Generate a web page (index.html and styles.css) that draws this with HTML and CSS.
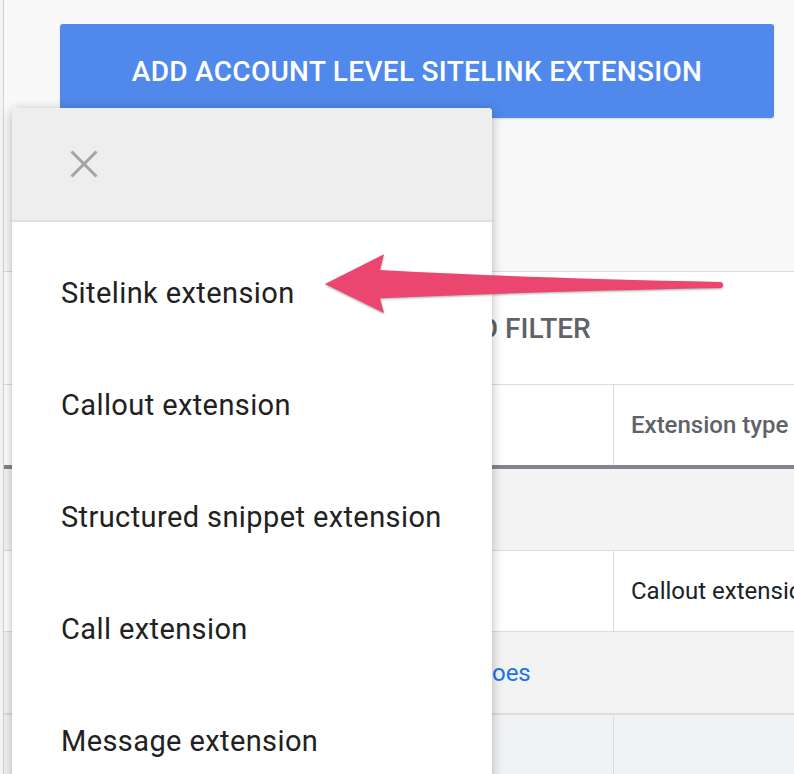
FILE: index.html
```html
<!DOCTYPE html>
<html lang="en">
<head>
<meta charset="utf-8">
<title>Extensions</title>
<link rel="stylesheet" href="styles.css">
</head>
<body>
<div class="page">
  <div class="rail"></div>
  <main class="content">
    <div class="btn-wrap">
      <button class="add-btn">ADD ACCOUNT LEVEL SITELINK EXTENSION</button>
    </div>
    <section class="table-card">
      <div class="filter-bar"><span class="add-filter">ADD FILTER</span></div>
      <div class="row head">
        <div class="cell c1"></div>
        <div class="cell c2">Extension type</div>
      </div>
      <div class="row span grey1"></div>
      <div class="row plain">
        <div class="cell c1"></div>
        <div class="cell c2 body-text">Callout extension</div>
      </div>
      <div class="row span grey2"><a class="link">See all shoes</a></div>
      <div class="row grey3">
        <div class="cell c1"></div>
        <div class="cell c2"></div>
      </div>
    </section>
  </main>
</div>

<div class="menu">
  <div class="menu-head">
    <svg class="close" width="28" height="28" viewBox="0 0 28 28" aria-label="Close">
      <path d="M1.5 1.5 L26.5 26.5 M26.5 1.5 L1.5 26.5" stroke="#a3a3a3" stroke-width="3" fill="none"/>
    </svg>
  </div>
  <ul class="menu-list">
    <li>Sitelink extension</li>
    <li>Callout extension</li>
    <li>Structured snippet extension</li>
    <li>Call extension</li>
    <li>Message extension</li>
  </ul>
</div>

<svg class="arrow" width="410" height="80" viewBox="0 0 410 80">
  <path d="M5 39 L64 9.3 L60 25 Q200 33 400 37 A3 3 0 0 1 400 43 Q200 47 60 53.3 L64 68 Z" fill="#ea4670"/>
</svg>
</body>
</html>
```

FILE: styles.css
```css
* { box-sizing: border-box; }

html, body {
  margin: 0;
  padding: 0;
  width: 794px;
  height: 774px;
  overflow: hidden;
  background: #f9f9f9;
  font-family: Roboto, "Liberation Sans", Arial, sans-serif;
}

.page {
  display: flex;
  width: 794px;
  height: 774px;
}

.rail {
  flex: 0 0 4px;
  background: #f4f4f4;
  border-right: 1px solid #d2d2d2;
}

.content {
  flex: 1 1 auto;
  min-width: 0;
  display: flex;
  flex-direction: column;
}

.btn-wrap {
  padding: 24px 0 0 56px;
}

.add-btn {
  width: 714px;
  height: 94px;
  border: none;
  border-radius: 3px;
  background: #5089eb;
  color: #ffffff;
  font-family: Roboto, "Liberation Sans", Arial, sans-serif;
  font-size: 28px;
  font-weight: 500;
  letter-spacing: 0.3px;
  display: flex;
  align-items: center;
  justify-content: center;
  padding: 0;
  box-shadow: 0 1px 2px rgba(0,0,0,0.12);
}

.table-card {
  margin-top: 153px;
  background: #ffffff;
  border-top: 1px solid #dadce0;
  flex: 1 1 auto;
  display: flex;
  flex-direction: column;
}

.filter-bar {
  height: 113px;
  display: flex;
  align-items: center;
  padding-left: 439px;
  border-bottom: 1px solid #dadce0;
}

.add-filter {
  font-size: 28px;
  font-weight: 500;
  color: #5f6368;
  white-space: nowrap;
}

.row {
  display: flex;
  white-space: nowrap;
  overflow: hidden;
}

.cell {
  display: flex;
  align-items: center;
}

.c1 {
  flex: 0 0 610px;
  border-right: 1px solid #dadce0;
}

.c2 {
  flex: 1 1 auto;
  padding-left: 17px;
  font-size: 24px;
}

.head {
  height: 84px;
  border-bottom: 4px solid #80868b;
  background: #ffffff;
}

.head .c2 {
  font-weight: 500;
  color: #5f6368;
}

.grey1 {
  height: 82px;
  background: #f4f4f4;
  border-bottom: 1px solid #dadce0;
}

.plain {
  height: 81px;
  background: #ffffff;
  border-bottom: 1px solid #dadce0;
}

.body-text {
  color: #202124;
}

.grey2 {
  height: 83px;
  background: #f3f3f4;
  border-bottom: 2px solid #dadce0;
  align-items: center;
  padding-left: 386px;
}

.link {
  font-size: 24px;
  color: #1a73e8;
  text-decoration: none;
}

.grey3 {
  flex: 1 1 auto;
  background: #f1f2f4;
}

/* Dropdown menu overlaying the page */
.menu {
  position: absolute;
  left: 12px;
  top: 108px;
  width: 480px;
  height: 700px;
  background: #ffffff;
  border-radius: 4px 4px 0 0;
  box-shadow: 0 2px 12px rgba(0,0,0,0.28);
}

.menu-head {
  height: 114px;
  background: #eeeeee;
  border-bottom: 2px solid #e0e0e0;
  border-radius: 4px 4px 0 0;
  display: flex;
  align-items: center;
  padding-left: 58px;
}

.close { display: block; }

.menu-list {
  list-style: none;
  margin: 0;
  padding: 15px 0 0 0;
}

.menu-list li {
  height: 112px;
  line-height: 112px;
  padding-left: 49px;
  font-size: 29px;
  letter-spacing: 0.4px;
  color: #212121;
  white-space: nowrap;
}

/* Annotation arrow */
.arrow {
  position: absolute;
  left: 320px;
  top: 245px;
  filter: drop-shadow(0 1.5px 1.2px rgba(0,0,0,0.35));
}
```
